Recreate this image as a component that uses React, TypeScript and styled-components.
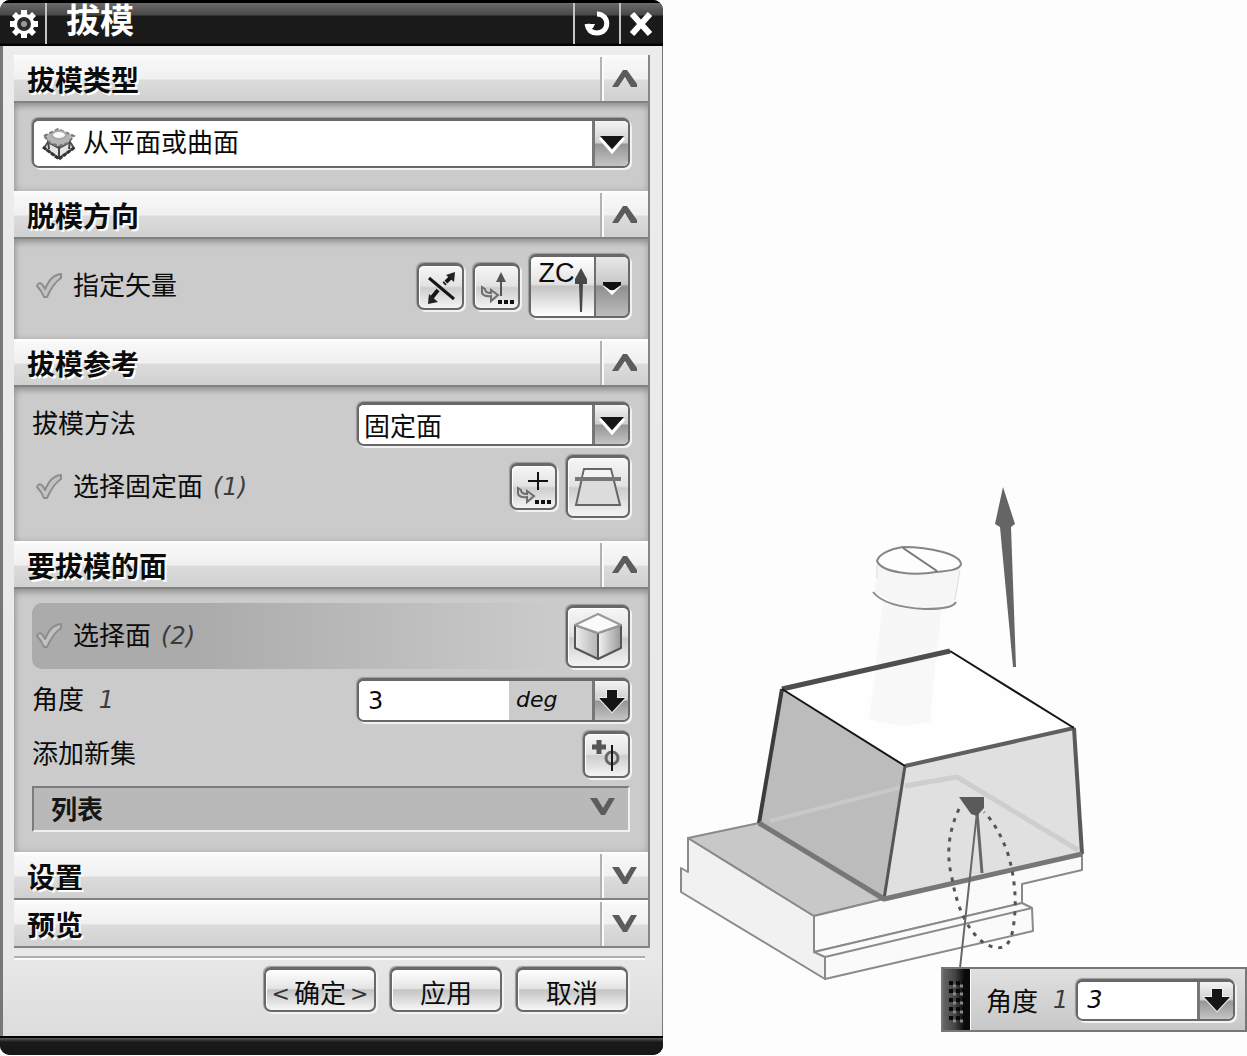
import React, { useState } from "react";
import styled, { createGlobalStyle, css } from "styled-components";

const sans = `"Liberation Sans", "Noto Sans CJK SC", sans-serif`;
const slanted = `"DejaVu Sans", "Noto Sans CJK SC", sans-serif`;

const GlobalStyle = createGlobalStyle`
  *, *::before, *::after { box-sizing: border-box; }
  body { margin: 0; background: #fdfdfd; color: #0c0c0c; font-family: ${sans}; }
  button, input, select { font: inherit; color: inherit; margin: 0; }
  svg { display: block; }
`;

const Screen = styled.main`
  display: flex;
  align-items: flex-start;
`;

const Dialog = styled.form`
  flex: 0 1 663px;
  min-width: 560px;
  border-radius: 10px;
  overflow: hidden;
  background: #000;
`;

const TitleBar = styled.header`
  display: flex;
  align-items: stretch;
  height: 46px;
  padding: 3px 3px 2px;
  color: #fff;
  background: linear-gradient(#000 3px, #6a6a6a 3px, #484848 15px, #1a1a1a 16px, #1a1a1a 43px, #000 44px);
`;

const TitleText = styled.h1`
  flex: 1;
  margin: 0;
  padding-left: 19px;
  font-size: 34px;
  font-weight: 700;
  line-height: 36px;
`;

const TitleButton = styled.button<{ $side: "left" | "right" }>`
  display: grid;
  place-items: center;
  width: ${(p) => (p.$side === "left" ? 44 : 46)}px;
  padding: 0;
  border: 0 solid #c4c4c4;
  ${(p) => (p.$side === "left" ? "border-right-width: 2px;" : "border-left-width: 2px;")}
  background: none;
  color: #fff;
  &:last-child { width: 41px; }
`;

const Body = styled.div`
  padding: 9px 12px 0 11px;
  border: solid #777;
  border-width: 0 1px 0 3px;
  background: linear-gradient(#ececec, #e8e8e8 92%, #dcdcdc);
`;

const Panels = styled.div`
  border-right: 2px solid #868686;
`;

const SectionHead = styled.h2`
  display: flex;
  height: 48px;
  margin: 0;
  border-bottom: 2px solid #828282;
  background: linear-gradient(#fff, #f8f8f8 4px, #f0f0f0 24px, #dcdcdc 25px, #d0d0d0);
  font-size: 28px;
  font-weight: 700;
  line-height: 42px;
`;

const SectionTitle = styled.span`
  flex: 1;
  padding: 6px 0 0 13px;
  text-shadow: 2px 2px 0 #fff;
`;

const Toggle = styled.button`
  display: grid;
  place-items: center;
  width: 48px;
  margin-top: 2px;
  padding: 0;
  border: 0;
  border-left: 2px solid #b2b2b2;
  background: none;
  box-shadow: inset 2px 0 0 #fafafa;
  color: #5c5c5c;
`;

const SectionBody = styled.div<{ $bottom: number; $gap?: number }>`
  display: flex;
  flex-direction: column;
  gap: ${(p) => p.$gap ?? 9}px;
  padding: 15px 18px ${(p) => p.$bottom}px;
  background: #cbcbcb;
  box-shadow: inset 4px 6px 6px -3px #8e8e8e, inset -4px -3px 6px -3px #a8a8a8;
`;

const Row = styled.div<{ $height: number; $active?: boolean }>`
  display: flex;
  align-items: center;
  gap: 9px;
  height: ${(p) => p.$height}px;
  font-size: 26px;
  ${(p) =>
    p.$active &&
    css`
      margin-top: -1px;
      border-radius: 10px 0 0 10px;
      background: linear-gradient(90deg, #ababab 28%, #cbcbcb 88%);
    `}
`;

const Label = styled.label<{ $tick?: boolean }>`
  display: flex;
  flex: 1;
  align-items: center;
  gap: ${(p) => (p.$tick ? 10 : 0)}px;
  padding-left: ${(p) => (p.$tick ? 3 : 0)}px;
  line-height: 36px;
  white-space: pre;
`;

const Count = styled.i`
  font-family: ${slanted};
  font-size: 24px;
  color: #3c3c3c;
`;

const raised = css`
  border: 2px solid #686868;
  border-top-width: 3px;
  border-radius: 7px;
  box-shadow: 2px 2px 0 #f2f2f2, -1px -1px 1px #9a9a9a, inset 1px 1px 0 #fff;
`;

const Tool = styled.button<{ $large?: boolean }>`
  ${raised}
  display: grid;
  place-items: center;
  flex: none;
  width: ${(p) => (p.$large ? 64 : 47)}px;
  height: ${(p) => (p.$large ? 63 : 47)}px;
  padding: 0;
  background: linear-gradient(#f6f6f6, #e2e2e2 48%, #cdcdcd 52%, #f4f4f4);
`;

const SplitTool = styled.div`
  ${raised}
  display: flex;
  flex: none;
  width: 101px;
  height: 64px;
  overflow: hidden;
`;

const SplitMain = styled.button`
  display: flex;
  flex: 1;
  align-items: flex-start;
  justify-content: center;
  padding: 0 4px 0 4px;
  border: 0;
  background: linear-gradient(#fff, #e2e2e2 46%, #c4c4c4 50%, #fff);
  font-size: 27px;
  line-height: 32px;
`;

const SplitArrow = styled.button`
  display: grid;
  place-items: center;
  width: 34px;
  padding: 0;
  border: 0;
  border-left: 2px solid #6e6e6e;
  background: linear-gradient(#e8e8e8, #c8c8c8 46%, #8f8f8f 50%, #bdbdbd);
`;

const Field = styled.div<{ $wide?: boolean; $tall?: boolean }>`
  ${raised}
  display: grid;
  grid-template-columns: minmax(0, 1fr) auto;
  flex: ${(p) => (p.$wide ? "1" : "0 0 273px")};
  height: ${(p) => (p.$tall ? 50 : 44)}px;
  overflow: hidden;
  background: #fff;
`;

const Choice = styled.select<{ $icon?: boolean }>`
  grid-area: 1 / 1 / 2 / 3;
  width: 100%;
  padding: ${(p) => (p.$icon ? "0 42px 2px 49px" : "5px 42px 0 5px")};
  border: 0;
  appearance: none;
  background: #fff;
  font-size: 26px;
`;

const ChoiceIcon = styled.span`
  grid-area: 1 / 1;
  align-self: center;
  justify-self: start;
  margin-left: 7px;
  pointer-events: none;
`;

const arrowCell = css`
  display: grid;
  place-items: center;
  width: 36px;
  padding: 0;
  border: 0;
  border-left: 3px solid #777;
  background: linear-gradient(#f4f4f4, #cfcfcf 48%, #969696 52%, #c4c4c4);
`;

const ChoiceArrow = styled.span`
  ${arrowCell}
  grid-area: 1 / 2;
  pointer-events: none;
`;

const NumberField = styled.div<{ $grow?: boolean }>`
  ${raised}
  display: flex;
  flex: ${(p) => (p.$grow ? "1" : "0 0 273px")};
  min-width: 0;
  height: ${(p) => (p.$grow ? 42 : 44)}px;
  overflow: hidden;
  background: #fff;
`;

const NumberInput = styled.input<{ $slanted?: boolean }>`
  flex: 1;
  min-width: 0;
  padding: 0 0 0 9px;
  border: 0;
  background: #fff;
  font-family: ${slanted};
  font-size: 24px;
  font-style: ${(p) => (p.$slanted ? "italic" : "normal")};
`;

const Unit = styled.span`
  width: 83px;
  padding-left: 7px;
  background: #cbcbcb;
  font: italic 22px/38px ${slanted};
`;

const FieldButton = styled.button`
  ${arrowCell}
`;

const ListBar = styled.button`
  display: flex;
  align-items: center;
  justify-content: space-between;
  height: 46px;
  padding: 0 12px 4px 17px;
  border: 2px solid #7c7c7c;
  border-right: 2px solid #f0f0f0;
  border-bottom: 2px solid #f0f0f0;
  background: #b9b9b9;
  font-size: 26px;
  font-weight: 700;
  color: #161616;
  svg { color: #5c5c5c; }
`;

const Footer = styled.footer`
  display: flex;
  justify-content: flex-end;
  gap: 14px;
  margin: 8px 5px 0 0;
  padding: 9px 17px 24px 0;
  border-top: 2px solid #b0b0b0;
  box-shadow: inset 0 2px 0 #fafafa;
`;

const Action = styled.button`
  ${raised}
  display: flex;
  align-items: center;
  justify-content: center;
  gap: 4px;
  width: 112px;
  height: 45px;
  padding: 8px 0 0;
  background: linear-gradient(#fff, #e4e4e4 46%, #c4c4c4 50%, #f6f6f6);
  font-size: 26px;
  line-height: 32px;
`;

const Bracket = styled.span`
  font-family: ${slanted};
  font-size: 22px;
  color: #333;
`;

const BottomEdge = styled.div`
  height: 19px;
  background: linear-gradient(#000 2px, #5a5a5a 2px, #1a1a1a 6px, #161616);
`;

const Viewport = styled.section`
  position: relative;
  flex: 1;
  min-width: 0;
`;

const Scene = styled.svg`
  width: 100%;
  height: auto;
`;

const FloatingEntry = styled.div`
  position: absolute;
  right: 0;
  bottom: 24px;
  display: flex;
  align-items: center;
  width: 306px;
  height: 65px;
  padding-right: 10px;
  border: 2px solid #777;
  background: linear-gradient(#e0e0e0, #c8c8c8);
  font-size: 26px;
`;

const Grip = styled.span`
  display: grid;
  place-items: center;
  align-self: stretch;
  width: 28px;
  border-right: 1px solid #fff;
  background: linear-gradient(90deg, #666, #444 45%, #0a0a0a 80%);
`;

const FloatLabel = styled.label`
  display: flex;
  align-items: center;
  gap: 15px;
  padding: 0 8px 0 15px;
`;

const Chevron = ({ down = false }: { down?: boolean }) => (
  <svg width="26" height="20" viewBox="0 0 26 20" aria-hidden="true">
    <path
      d={down ? "M0 1H7L13 11L19 1H25L15 18H11Z" : "M0 18H6L13 8L19 18H25V15L15 1H11Z"}
      fill="currentColor"
    />
  </svg>
);

const Triangle = () => (
  <svg width="28" height="20" viewBox="0 0 28 20" aria-hidden="true">
    <path d="M2 4L14 18L26 4" fill="none" stroke="#fff" strokeWidth="3" />
    <path d="M2 2H26L14 15Z" fill="#151515" />
  </svg>
);

const SmallTriangle = () => (
  <svg width="22" height="16" viewBox="0 0 22 16" aria-hidden="true">
    <path d="M3 6L11 14L19 6" fill="none" stroke="#fff" strokeWidth="3" />
    <path d="M2 3H20V6L13 11H9L2 6Z" fill="#111" />
  </svg>
);

const DownArrow = () => (
  <svg width="28" height="26" viewBox="0 0 28 26" aria-hidden="true">
    <path d="M9 2H19V10H27L14 24L1 10H9Z" fill="#151515" stroke="#eee" strokeWidth="2" paintOrder="stroke" />
  </svg>
);

const Tick = () => (
  <svg width="28" height="28" viewBox="0 0 28 28" aria-hidden="true">
    <path
      d="M2 14C4 9 7 11 10 17C14 8 18 3 26 2V6C20 10 16 16 12 25H9C7 20 5 17 2 14Z"
      fill="#c2c2c2" stroke="#8d8d8d" strokeWidth="2" strokeLinejoin="round"
    />
  </svg>
);

const Gear = () => (
  <svg width="30" height="30" viewBox="0 0 30 30" aria-hidden="true">
    <path
      d="M12 1H18V5L20 6L23 3L27 7L24 10L25 12H29V18H25L24 20L27 23L23 27L20 24L18 25V29H12V25L10 24L7 27L3 23L6 20L5 18H1V12H5L6 10L3 7L7 3L10 6L12 5Z"
      fill="#fff"
    />
    <circle cx="15" cy="15" r="7" fill="#2b2b2b" />
    <circle cx="15" cy="15" r="3" fill="#999" />
  </svg>
);

const ResetIcon = () => (
  <svg width="28" height="28" viewBox="0 0 28 28" fill="none" aria-hidden="true">
    <path d="M14 4C27 4 27 23 14 23C8 23 5 20 4 14" stroke="#fff" strokeWidth="5" />
    <path d="M2 14L12 14L10 18L6 20Z" fill="#fff" />
  </svg>
);

const CloseIcon = () => (
  <svg width="28" height="28" viewBox="0 0 28 28" aria-hidden="true">
    <path d="M5 4L23 24M23 4L5 24" stroke="#fff" strokeWidth="6" />
  </svg>
);

const DraftIcon = () => (
  <svg width="36" height="34" viewBox="0 0 36 34" fill="none" stroke="#555" strokeWidth="2" aria-hidden="true">
    <path d="M3 21L7 15L18 21L29 15L33 21L18 31Z" fill="#e4e4e4" />
    <path d="M18 18V32M7 13L8 22M29 13L28 22" stroke="#444" />
    <path d="M2 20L18 32L34 20" stroke="#333" strokeWidth="3" strokeDasharray="4 1" />
    <path d="M3 9L17 2L33 9L27 16L18 19L9 16Z" fill="#b5b5b5" stroke="#777" strokeDasharray="4 2" />
    <ellipse cx="18" cy="8" rx="7" ry="4" fill="#f8f8f8" stroke="#aaa" />
  </svg>
);

const ReverseIcon = () => (
  <svg width="38" height="38" viewBox="0 0 38 38" stroke="#151515" fill="#222" aria-hidden="true">
    <path d="M7 10L32 31" strokeWidth="3" />
    <path d="M31 7L22 16M16 22L8 32" strokeWidth="4" strokeDasharray="10 1" />
    <path d="M33 4L32 14L24 7ZM6 36L7 26L16 34Z" stroke="none" />
  </svg>
);

const BentArrow = () => (
  <path d="M4 19V25Q6 29 13 28V33L20 27L13 22V25Q7 25 7 21Z" fill="#d5d5d5" stroke="#6e6e6e" strokeWidth="2" />
);

const Dots = () => <path d="M20 34H24M26 34H30M32 34H36" stroke="#111" strokeWidth="4" />;

const VectorIcon = () => (
  <svg width="38" height="38" viewBox="0 0 38 38" aria-hidden="true">
    <BentArrow />
    <path d="M23 28V12" stroke="#555" strokeWidth="2" />
    <path d="M23 4L28 14H18Z" fill="#555" />
    <Dots />
  </svg>
);

const PointIcon = () => (
  <svg width="38" height="38" viewBox="0 0 38 38" aria-hidden="true">
    <g transform="translate(-1 1)"><BentArrow /></g>
    <path d="M23 4V22M13 13H33" stroke="#111" strokeWidth="2" />
    <Dots />
  </svg>
);

const FixedFaceIcon = () => (
  <svg width="50" height="44" viewBox="0 0 50 44" aria-hidden="true">
    <path d="M11 4H38L47 40H3Z" fill="#dcdcdc" stroke="#666" strokeWidth="2" />
    <path d="M12 5H37L39 12H10Z" fill="#f4f4f4" />
    <path d="M2 14H48" stroke="#777" strokeWidth="4" />
  </svg>
);

const CubeIcon = () => (
  <svg width="50" height="50" viewBox="0 0 50 50" stroke="#555" strokeWidth="2" strokeLinejoin="round" aria-hidden="true">
    <defs>
      <linearGradient id="cubeLeft"><stop stopColor="#eee" /><stop offset="1" stopColor="#b4b4b4" /></linearGradient>
      <linearGradient id="cubeRight"><stop stopColor="#f4f4f4" /><stop offset="1" stopColor="#999" /></linearGradient>
    </defs>
    <path d="M2 13L25 21V47L2 36Z" fill="url(#cubeLeft)" />
    <path d="M48 13L25 21V47L48 36Z" fill="url(#cubeRight)" />
    <path d="M25 2L48 13L25 21L2 13Z" fill="#fafafa" stroke="#999" />
  </svg>
);

const NewSetIcon = () => (
  <svg width="38" height="38" viewBox="0 0 38 38" fill="none" aria-hidden="true">
    <path d="M11 4V18M4 11H18" stroke="#555" strokeWidth="5" />
    <circle cx="24" cy="22" r="6" stroke="#666" strokeWidth="3" />
    <path d="M24 9V35" stroke="#151515" strokeWidth="2" />
  </svg>
);

const UpArrow = () => (
  <svg width="12" height="58" viewBox="0 0 12 58" aria-hidden="true">
    <path d="M6 11L12 22V27H8L7 55H5L4 27H0V22Z" fill="#484848" />
  </svg>
);

const GripDots = () => (
  <svg width="24" height="50" viewBox="0 0 24 50" aria-hidden="true">
    {[8, 16, 25, 34, 43].map((y) => (
      <g key={y}>
        <path d={`M4 ${y}h4M11 ${y}h4M17 ${y}h4`} stroke="#080808" strokeWidth="4" />
        <path d={`M8 ${y + 3}h3M15 ${y + 3}h3`} stroke="#888" strokeWidth="3" />
      </g>
    ))}
  </svg>
);

function Section({ title, open: initial = false, bottom = 0, gap, children }: {
  title: string; open?: boolean; bottom?: number; gap?: number; children?: React.ReactNode;
}) {
  const [open, setOpen] = useState(initial);
  return (
    <section>
      <SectionHead>
        <SectionTitle>{title}</SectionTitle>
        <Toggle type="button" aria-label={title} aria-expanded={open} onClick={() => setOpen(!open)}>
          <Chevron down={!open} />
        </Toggle>
      </SectionHead>
      {open && children && <SectionBody $bottom={bottom} $gap={gap}>{children}</SectionBody>}
    </section>
  );
}

const Model = () => (
  <Scene viewBox="663 0 584 1056" fill="none" strokeLinejoin="round" role="img">
    <path d="M883 600L869 718Q895 730 930 722L942 604Z" fill="#f7f7f7" />
    <path d="M877 564L875 592Q905 611 955 604L960 565Z" fill="#f6f6f6" />
    <path d="M873 592Q885 607 925 609Q953 609 956 602" stroke="#8c8c8c" strokeWidth="2" />
    <path d="M955 600L960 570M877 565V578" stroke="#ddd" />
    <path d="M877 561C879 554 890 549 903 547C930 547 960 554 961 564C960 570 948 571 936 572C915 576 882 573 877 561Z" fill="#fdfdfd" stroke="#858585" strokeWidth="2" />
    <path d="M903 548L937 571" stroke="#777" strokeWidth="2" />
    <path d="M1003 487L1015 524L1011 527L1016 667H1013L1000 527L995 524Z" fill="#656565" />

    <g stroke="#8a8a8a" strokeWidth="2">
      <path d="M688 838V872L681 868V892L825 979V956L814 950V916Z" fill="#f1f1f1" />
      <path d="M759 823L688 838L814 916L884 899Z" fill="#c8c8c8" />
      <path d="M814 916L884 899L1082 854V870L1022 884V903L814 952Z" fill="#fafafa" />
      <path d="M814 952L1022 903L1032 908L1033 931L825 979V957Z" fill="#fafafa" />
      <path d="M825 957L1032 908" />
    </g>

    <path d="M782 689L950 651L1074 728L905 766Z" fill="#fefefe" />
    <path d="M876 670L869 718Q895 730 930 722L936 656Z" fill="#f8f8f8" />
    <path d="M782 689L905 766L884 899L759 823Z" fill="#bcbcbc" />
    <path d="M905 766L1074 728L1082 854L884 899Z" fill="#e0e0e0" />
    <path d="M770 821L902 787" stroke="#c8c8c8" strokeWidth="4" />
    <path d="M905 786L957 777L1078 850" stroke="#cecece" strokeWidth="5" />
    <path d="M782 689L950 651" stroke="#4e4e4e" strokeWidth="5" />
    <path d="M905 766L1074 728" stroke="#5f5f5f" strokeWidth="4" />
    <path d="M782 689L759 823" stroke="#3c3c3c" strokeWidth="4" />
    <path d="M1074 728L1082 854" stroke="#5a5a5a" strokeWidth="4" />
    <path d="M905 766L884 899" stroke="#555" strokeWidth="3" />
    <path d="M759 823L884 899L1082 854" stroke="#777" strokeWidth="5" />
    <path d="M782 689L905 766M950 651L1074 728" stroke="#151515" strokeWidth="2" />

    <path d="M959 809Q943 843 952 878Q960 925 984 943Q1006 956 1012 934Q1020 895 1008 854Q998 826 984 812" stroke="#555" strokeWidth="3" strokeDasharray="4 6" />
    <path d="M977 812L960 968" stroke="#666" strokeWidth="2" />
    <path d="M977 812L982 873" stroke="#666" strokeWidth="3" />
    <path d="M959 797H984V808L977 816L971 814Z" fill="#5a5a5a" />
  </Scene>
);

export default function App() {
  const [angle, setAngle] = useState("3");
  return (
    <>
      <GlobalStyle />
      <Screen>
        <Dialog onSubmit={(e) => e.preventDefault()}>
          <TitleBar>
            <TitleButton type="button" $side="left" aria-label="设置"><Gear /></TitleButton>
            <TitleText>拔模</TitleText>
            <TitleButton type="button" $side="right" aria-label="重置"><ResetIcon /></TitleButton>
            <TitleButton type="button" $side="right" aria-label="关闭"><CloseIcon /></TitleButton>
          </TitleBar>
          <Body>
            <Panels>
              <Section title="拔模类型" open bottom={23}>
                <Row $height={50}>
                  <Field $wide $tall>
                    <Choice $icon aria-label="拔模类型"><option>从平面或曲面</option></Choice>
                    <ChoiceIcon><DraftIcon /></ChoiceIcon>
                    <ChoiceArrow><Triangle /></ChoiceArrow>
                  </Field>
                </Row>
              </Section>

              <Section title="脱模方向" open bottom={21}>
                <Row $height={64}>
                  <Label as="span" $tick><Tick />指定矢量</Label>
                  <Tool type="button" aria-label="反向"><ReverseIcon /></Tool>
                  <Tool type="button" aria-label="矢量对话框"><VectorIcon /></Tool>
                  <SplitTool>
                    <SplitMain type="button">ZC<UpArrow /></SplitMain>
                    <SplitArrow type="button" aria-label="矢量类型"><SmallTriangle /></SplitArrow>
                  </SplitTool>
                </Row>
              </Section>

              <Section title="拔模参考" open bottom={23}>
                <Row $height={44}>
                  <Label htmlFor="method">拔模方法</Label>
                  <Field>
                    <Choice id="method"><option>固定面</option></Choice>
                    <ChoiceArrow><Triangle /></ChoiceArrow>
                  </Field>
                </Row>
                <Row $height={63}>
                  <Label as="span" $tick><Tick />选择固定面<Count>(1)</Count></Label>
                  <Tool type="button" aria-label="点对话框"><PointIcon /></Tool>
                  <Tool type="button" $large aria-label="固定面"><FixedFaceIcon /></Tool>
                </Row>
              </Section>

              <Section title="要拔模的面" open bottom={20}>
                <Row $height={66} $active>
                  <Label as="span" $tick><Tick />选择面<Count>(2)</Count></Label>
                  <Tool type="button" $large aria-label="面"><CubeIcon /></Tool>
                </Row>
                <Row $height={44}>
                  <Label htmlFor="angle">角度 <Count> 1</Count></Label>
                  <NumberField>
                    <NumberInput id="angle" value={angle} onChange={(e) => setAngle(e.target.value)} />
                    <Unit>deg</Unit>
                    <FieldButton type="button" aria-label="角度选项"><DownArrow /></FieldButton>
                  </NumberField>
                </Row>
                <Row $height={46}>
                  <Label as="span">添加新集</Label>
                  <Tool type="button" aria-label="添加新集"><NewSetIcon /></Tool>
                </Row>
                <ListBar type="button">列表<Chevron down /></ListBar>
              </Section>

              <Section title="设置" />
              <Section title="预览" />
            </Panels>
            <Footer>
              <Action type="submit"><Bracket>&lt;</Bracket>确定<Bracket>&gt;</Bracket></Action>
              <Action type="button">应用</Action>
              <Action type="button">取消</Action>
            </Footer>
          </Body>
          <BottomEdge />
        </Dialog>

        <Viewport>
          <Model />
          <FloatingEntry>
            <Grip><GripDots /></Grip>
            <FloatLabel htmlFor="floatAngle">角度<Count>1</Count></FloatLabel>
            <NumberField $grow>
              <NumberInput id="floatAngle" $slanted value={angle} onChange={(e) => setAngle(e.target.value)} />
              <FieldButton type="button" aria-label="角度选项"><DownArrow /></FieldButton>
            </NumberField>
          </FloatingEntry>
        </Viewport>
      </Screen>
    </>
  );
}
